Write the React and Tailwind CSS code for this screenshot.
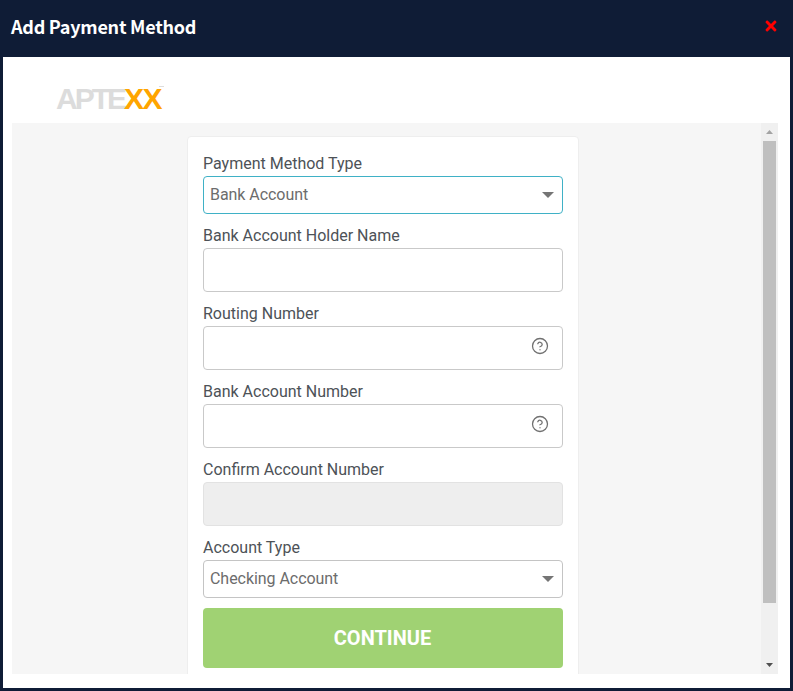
import { CircleHelp } from "lucide-react";
import { FaTimes } from "react-icons/fa";

const labelClass = "block h-6 mb-px pt-px text-[16px] leading-6 text-[#4d5257]";

const Caret = () => (
  <svg className="pointer-events-none absolute right-[9px] top-[16px]" width="12" height="6" viewBox="0 0 12 6">
    <path d="M0 0h12L6 6z" fill="#757575" />
  </svg>
);

const SelectField = ({ label, value, options, focused }) => (
  <div>
    <label className={labelClass}>{label}</label>
    <div className="relative">
      <select
        defaultValue={value}
        className={`block h-[38px] w-full appearance-none rounded border bg-white px-[6px] text-[16px] tracking-[-0.05px] text-[#6c6c6c] outline-none ${
          focused ? "border-[#3fb1c6]" : "border-[#c4c4c4]"
        }`}
      >
        {options.map((o) => (
          <option key={o}>{o}</option>
        ))}
      </select>
      <Caret />
    </div>
  </div>
);

const TextField = ({ label, help, disabled }) => (
  <div>
    <label className={labelClass}>{label}</label>
    <div className="relative">
      <input
        type="text"
        disabled={disabled}
        className={`block h-[44px] w-full rounded border border-[#c9c9c9] px-2 outline-none ${
          disabled ? "bg-[#eeeeee] border-[#e2e2e2]" : "bg-white"
        }`}
      />
      {help && <CircleHelp className="absolute right-[14px] top-[11px] h-[18px] w-[18px] text-[#707070]" strokeWidth={1.7} />}
    </div>
  </div>
);

const App = () => {
  return (
    <div className="flex h-[691px] w-[793px] flex-col overflow-hidden bg-[#0f1c36] font-['Roboto',sans-serif]">
      <div className="flex h-[57px] shrink-0 items-center justify-between pl-[11px] pr-[15px]">
        <h1 className="mb-[5px] font-['Noto_Sans_CJK_SC',sans-serif] text-[18px] font-bold tracking-[-0.25px] text-white">Add Payment Method</h1>
        <button className="mb-[5px] text-[#ff0000]">
          <FaTimes className="h-[16px] w-[14px]" />
        </button>
      </div>

      <div className="mx-[3px] mb-[3px] flex min-h-0 flex-1 flex-col bg-white pb-[14px] pl-[9px] pr-[12px]">
        <div className="flex h-[66px] shrink-0 items-end pb-[9px] pl-[44px]">
          <div className="relative font-['Liberation_Sans',sans-serif] text-[30px] font-bold leading-[30px]">
            <span className="tracking-[-3px] text-[#dcdcdc]">APTE</span>
            <span className="tracking-[-1.6px] text-[#ffa500]">XX</span>
            <span className="absolute -right-[3px] top-[2px] h-px w-[5px] bg-[#dddddd]" />
          </div>
        </div>

        <div className="flex min-h-0 flex-1 bg-[#f6f6f6]">
          <div className="flex-1 overflow-hidden pl-[175px] pt-[13px]">
            <div className="flex w-[392px] flex-col gap-[9px] rounded-t-sm border border-[#eeeeee] bg-white px-[15px] pt-[14px] pb-4">
              <SelectField label="Payment Method Type" value="Bank Account" options={["Bank Account", "Credit Card"]} focused />
              <TextField label="Bank Account Holder Name" />
              <TextField label="Routing Number" help />
              <TextField label="Bank Account Number" help />
              <TextField label="Confirm Account Number" disabled />
              <SelectField label="Account Type" value="Checking Account" options={["Checking Account", "Savings Account"]} />
              <button className="mt-px h-[60px] w-full rounded bg-[#a0d273] pr-px text-[20px] font-bold text-white">CONTINUE</button>
            </div>
          </div>

          <div className="flex w-[17px] shrink-0 flex-col items-center bg-[#f0f0f0]">
            <div className="flex h-[18px] w-full items-center justify-center">
              <svg width="7" height="4" viewBox="0 0 7 4">
                <path d="M0 4h7L3.5 0z" fill="#a3a3a3" />
              </svg>
            </div>
            <div className="h-[462px] w-[13px] bg-[#bfbfbf]" />
            <div className="mt-auto flex h-[18px] w-full items-center justify-center">
              <svg width="7" height="4" viewBox="0 0 7 4">
                <path d="M0 0h7L3.5 4z" fill="#505050" />
              </svg>
            </div>
          </div>
        </div>
      </div>
    </div>
  );
};

export default App;
